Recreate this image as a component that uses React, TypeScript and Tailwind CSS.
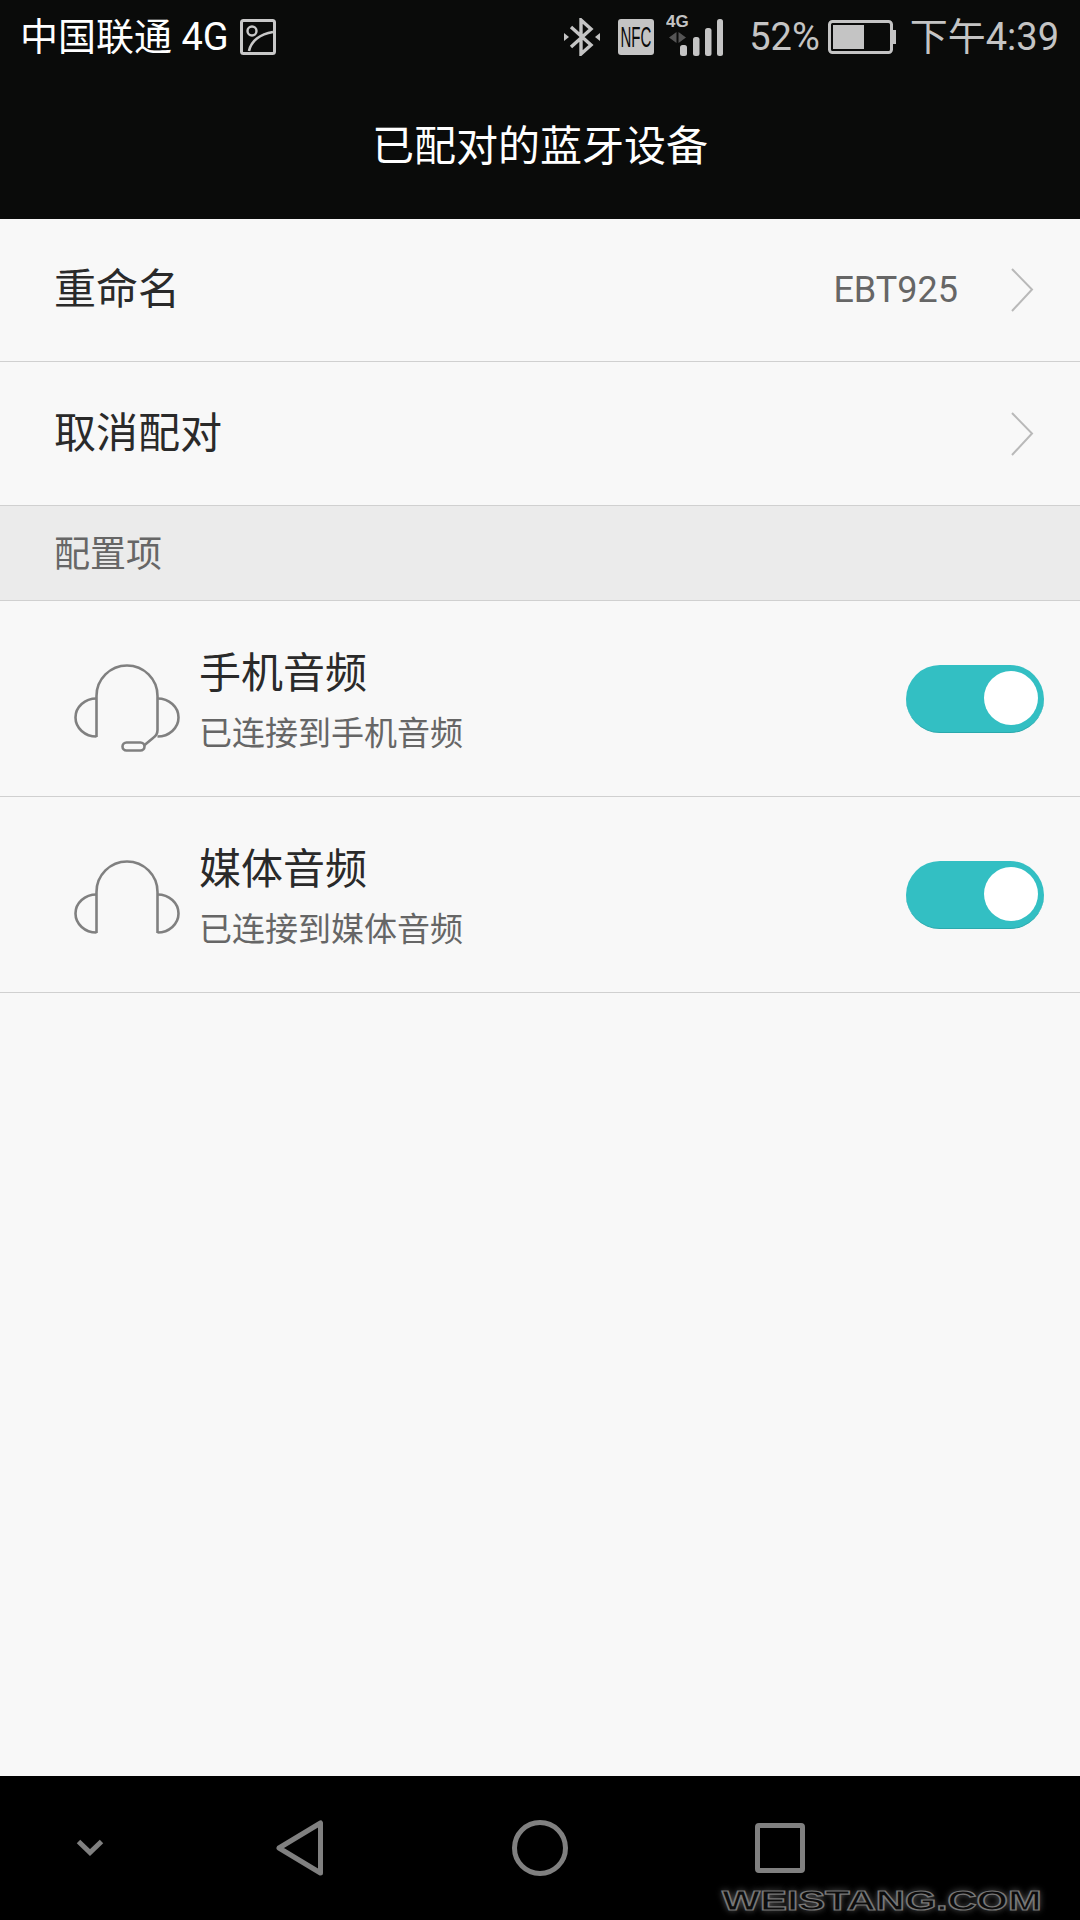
const FONT = "font-['Roboto','Noto_Sans_CJK_SC',sans-serif]";

function Chevron() {
  return (
    <svg width="24" height="44" viewBox="0 0 24 44" fill="none" stroke="#b9b9b9" strokeWidth="2">
      <path d="M2 1 L22 21.5 L2 43" />
    </svg>
  );
}

function Toggle() {
  return (
    <div className="flex h-[68px] w-[138px] items-center justify-end rounded-full border-b border-[#2aa9ad] bg-[#33bfc3] pr-[6px]">
      <div className="h-[54px] w-[54px] rounded-full bg-white" />
    </div>
  );
}

function Headset({ mic }: { mic?: boolean }) {
  return (
    <svg width="110" height="100" viewBox="0 0 110 100" fill="none" stroke="#808080" strokeWidth="2.6" className="shrink-0">
      {mic ? (
        <>
          <path d="M24.5 77 V36 a30.5 30.5 0 0 1 61 0 V70 Q85.5 75 81 78 L72 85.5" />
          <rect x="50.5" y="82.5" width="22" height="8" rx="4" />
        </>
      ) : (
        <path d="M24.5 77 V36 a30.5 30.5 0 0 1 61 0 V77" />
      )}
      <path d="M24.5 38.5 A21 19 0 0 0 24.5 76.5" />
      <path d="M85.5 38.5 A21 19 0 0 1 85.5 76.5" />
    </svg>
  );
}

function NavRow({ label, value }: { label: string; value?: string }) {
  return (
    <div className="flex flex-1 items-center pl-[54px] pr-[46px]">
      <span className="flex-1 text-[42px] leading-none text-[#2a2a2a]">{label}</span>
      {value ? <span className="mr-[52px] text-[36px] leading-none text-[#666]">{value}</span> : null}
      <Chevron />
    </div>
  );
}

function AudioRow({ title, subtitle, mic }: { title: string; subtitle: string; mic?: boolean }) {
  return (
    <div className="flex h-[195px] items-start pl-[72px] pr-[36px]">
      <div className="mt-[59px]">
        <Headset mic={mic} />
      </div>
      <div className="ml-[17px] mt-[43px] flex-1">
        <div className="text-[42px] leading-[60px] text-[#2a2a2a]">{title}</div>
        <div className="text-[33px] leading-[60px] text-[#666]">{subtitle}</div>
      </div>
      <div className="self-center">
        <Toggle />
      </div>
    </div>
  );
}

function StatusBar() {
  return (
    <div className="flex h-[74px] items-center pl-[20px] pr-[21px] text-[#c4c4c4]">
      <span className="text-[38px] leading-none whitespace-nowrap text-white">中国联通 4G</span>
      <svg width="36" height="36" viewBox="0 0 36 36" fill="none" stroke="#c8c8c8" className="ml-[11px]">
        <rect x="1.5" y="1.5" width="33" height="33" rx="2" strokeWidth="3" />
        <circle cx="12" cy="12" r="4.5" strokeWidth="2.4" />
        <path d="M9 32 C11 22 20 15 33 13" strokeWidth="2.6" />
      </svg>
      <svg width="36" height="38" viewBox="0 0 36 38" fill="none" className="ml-auto">
        <path d="M7 9 L27 27 L17 36 V2 L27 11 L7 29" stroke="#c4c4c4" strokeWidth="3.4" />
        <polygon points="0,15 5,19 0,23" fill="#c4c4c4" />
        <polygon points="36,15 31,19 36,23" fill="#c4c4c4" />
      </svg>
      <div className="ml-[18px] flex h-[36px] w-[36px] items-center justify-center overflow-hidden rounded-[3px] bg-[#c4c4c4]">
        <span className="scale-x-[0.5] font-['Liberation_Sans',sans-serif] text-[30px] leading-none whitespace-nowrap text-[#0a0a0a]">NFC</span>
      </div>
      <svg width="57" height="50" viewBox="0 0 57 50" fill="#c4c4c4" className="ml-[12px]">
        <text x="0" y="15" fontFamily="Liberation Sans" fontWeight="700" fontSize="17">4G</text>
        <polygon points="3,25.5 10.5,20 10.5,31" fill="#555" />
        <polygon points="20,25.5 12.5,20 12.5,31" fill="#555" />
        <rect x="14" y="33" width="7" height="11" rx="2.5" />
        <rect x="27" y="25" width="6.5" height="19" rx="2.5" />
        <rect x="39" y="16" width="6.5" height="28" rx="2.5" />
        <rect x="51" y="7" width="6" height="37" rx="2.5" />
      </svg>
      <span className="ml-[26px] text-[38px] leading-none">52%</span>
      <svg width="68" height="34" viewBox="0 0 68 34" fill="none" className="ml-[8px]">
        <rect x="1.5" y="1.5" width="62" height="31" rx="3" stroke="#c4c4c4" strokeWidth="3" />
        <rect x="5" y="5" width="31" height="24" fill="#c4c4c4" />
        <rect x="65" y="10" width="3" height="14" fill="#c4c4c4" />
      </svg>
      <span className="ml-[14px] text-[38px] leading-none whitespace-nowrap">下午4:39</span>
    </div>
  );
}

function BottomBar() {
  return (
    <div className="relative grid h-[144px] grid-cols-[180px_240px_240px_240px_180px] items-center bg-black">
      <div className="flex justify-center">
        <svg width="28" height="18" viewBox="0 0 28 18" fill="none" stroke="#808080" strokeWidth="5">
          <path d="M2.5 2.5 L14 13.5 L25.5 2.5" />
        </svg>
      </div>
      <div className="flex justify-center">
        <svg width="48" height="56" viewBox="0 0 48 56" fill="none" stroke="#808080" strokeWidth="5" strokeLinejoin="round">
          <path d="M44.5 3 V53 L3 28 Z" />
        </svg>
      </div>
      <div className="flex justify-center">
        <div className="h-[56px] w-[56px] rounded-full border-[5px] border-[#808080]" />
      </div>
      <div className="flex justify-center">
        <div className="h-[50px] w-[50px] rounded-[4px] border-[5px] border-[#808080]" />
      </div>
      {/* site mark over the bar */}
      <span className="absolute bottom-[5px] left-[722px] w-[240px] origin-left scale-x-[1.44] font-['Liberation_Sans',sans-serif] text-[28px] leading-[28px] font-bold whitespace-nowrap text-[#0c0c0c] [-webkit-text-stroke:1.2px_#777] [text-shadow:0_0_6px_#666]">
        WEISTANG.COM
      </span>
    </div>
  );
}

export default function App() {
  return (
    <div className={`${FONT} flex h-[1920px] w-[1080px] flex-col overflow-hidden bg-[#f8f8f8]`}>
      <header className="h-[219px] bg-[#0a0b0a]">
        <StatusBar />
        <div className="flex h-[145px] items-center justify-center text-[42px] leading-none text-white">已配对的蓝牙设备</div>
      </header>

      <main className="flex-1">
        <div className="flex h-[143px] border-b-[1.5px] border-[#d0d0d0]">
          <NavRow label="重命名" value="EBT925" />
        </div>
        <div className="flex h-[144px] border-b-[1.5px] border-[#d0d0d0]">
          <NavRow label="取消配对" />
        </div>
        <div className="flex h-[95px] items-center border-b-[1.5px] border-[#d0d0d0] bg-[#ebebeb] pl-[54px] pt-[3px] text-[36px] leading-none text-[#666]">
          配置项
        </div>
        <div className="border-b-[1.5px] border-[#d0d0d0]">
          <AudioRow title="手机音频" subtitle="已连接到手机音频" mic />
        </div>
        <div className="border-b-[1.5px] border-[#d0d0d0]">
          <AudioRow title="媒体音频" subtitle="已连接到媒体音频" />
        </div>
      </main>

      <BottomBar />
    </div>
  );
}
